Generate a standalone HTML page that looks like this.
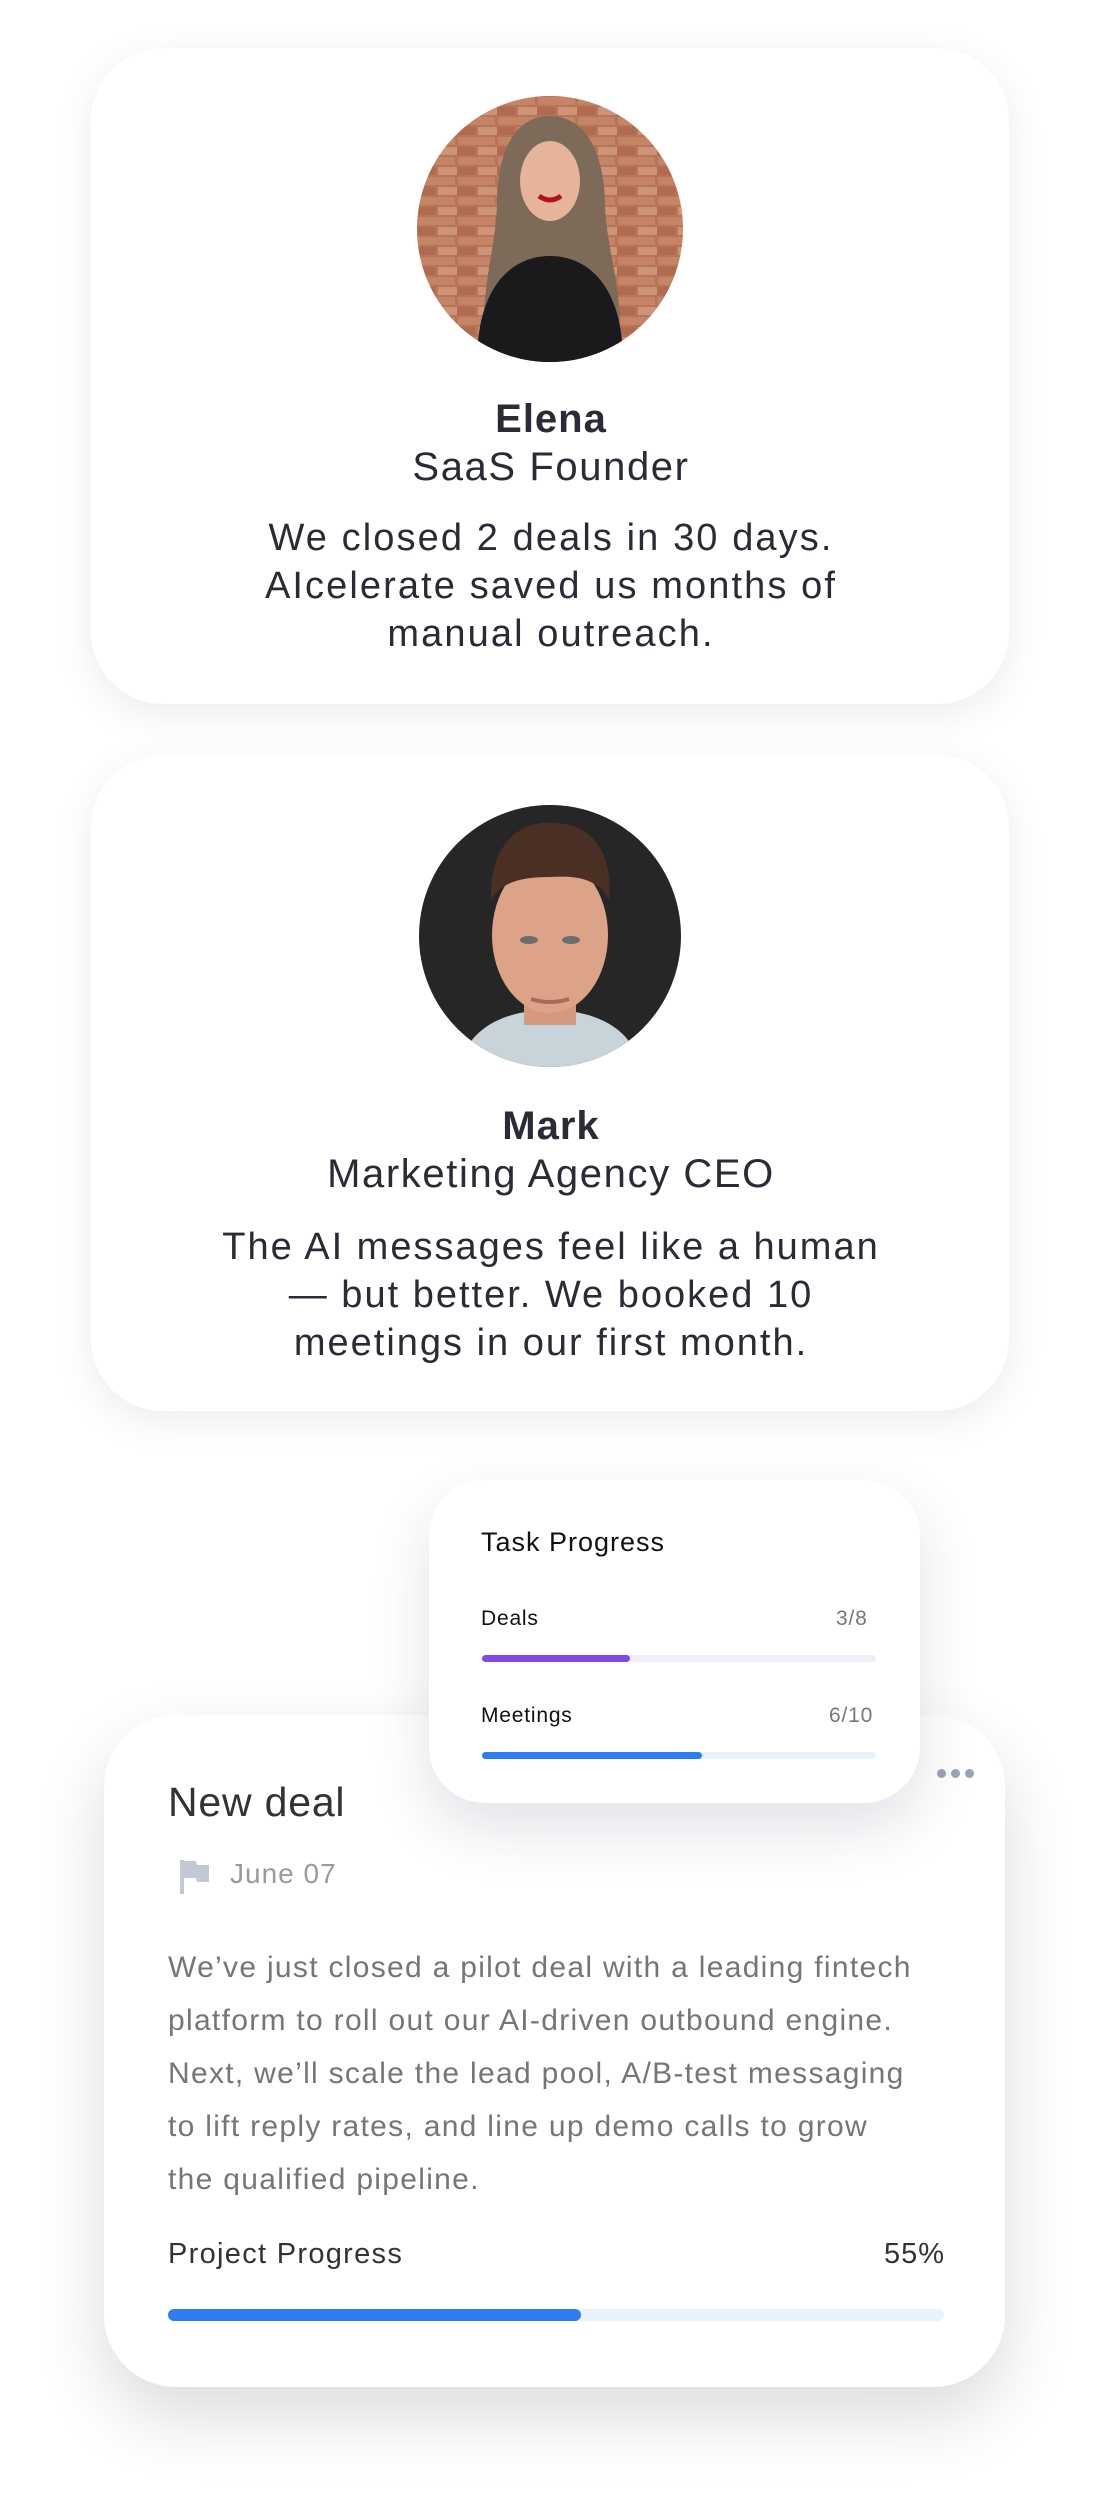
<!DOCTYPE html>
<html><head><meta charset="utf-8"><style>
*{margin:0;padding:0;box-sizing:border-box}
html,body{width:1102px;height:2510px;background:#fff;overflow:hidden;position:relative}
body{font-family:"Liberation Sans",sans-serif}
.card{position:absolute;background:#fff;border-radius:72px;box-shadow:0 10px 40px rgba(0,0,0,0.08)}
.t{position:absolute;left:0;width:100%;text-align:center;color:#2a2b36;white-space:nowrap}
.abs{position:absolute;white-space:nowrap}
.bar{position:absolute;border-radius:6px}
</style></head><body>

<div class="card" style="left:91px;top:48px;width:918px;height:656px"></div>
<svg class="abs" style="left:417px;top:96px" width="266" height="266" viewBox="0 0 266 266">
<defs><clipPath id="c1"><circle cx="133" cy="133" r="133"/></clipPath>
<pattern id="br" width="40" height="20" patternUnits="userSpaceOnUse"><rect width="40" height="20" fill="#b87458"/><rect x="1" y="1" width="37" height="8" fill="#c68466"/><rect x="-19" y="11" width="37" height="8" fill="#b06a50"/><rect x="21" y="11" width="37" height="8" fill="#cf9478"/></pattern></defs>
<g clip-path="url(#c1)"><rect width="266" height="266" fill="url(#br)"/>
<path d="M133 20 C95 20 80 60 80 110 C78 160 60 200 70 266 L200 266 C210 200 190 160 188 110 C188 60 170 20 133 20Z" fill="#7d6a58"/>
<ellipse cx="133" cy="85" rx="30" ry="40" fill="#e5b49a"/>
<path d="M60 266 C60 190 95 160 133 160 C171 160 206 190 206 266Z" fill="#1a1a1c"/>
<path d="M122 100 Q133 108 144 100" stroke="#b01020" stroke-width="5" fill="none"/></g></svg>
<div class="t" style="top:397px;font-size:40px;font-weight:bold;letter-spacing:1px">Elena</div>
<div class="t" style="top:445px;font-size:40px;letter-spacing:1.6px">SaaS Founder</div>
<div class="t" style="top:514px;font-size:38px;line-height:48px;letter-spacing:2.1px">We closed 2 deals in 30 days.<br>AIcelerate saved us months of<br>manual outreach.</div>

<div class="card" style="left:91px;top:755px;width:918px;height:656px"></div>
<svg class="abs" style="left:419px;top:805px" width="262" height="262" viewBox="0 0 262 262">
<defs><clipPath id="c2"><circle cx="131" cy="131" r="131"/></clipPath></defs>
<g clip-path="url(#c2)"><rect width="262" height="262" fill="#262626"/>
<path d="M40 262 C50 220 90 205 131 205 C172 205 212 220 222 262Z" fill="#c9d3da"/>
<rect x="105" y="180" width="52" height="40" fill="#d49a7e"/>
<ellipse cx="131" cy="130" rx="58" ry="78" fill="#dca388"/>
<path d="M72 95 C70 40 100 15 135 18 C170 18 195 45 190 95 C180 75 160 70 131 72 C100 72 82 78 72 95Z" fill="#4a3024"/>
<ellipse cx="110" cy="135" rx="9" ry="4" fill="#6a6e6a"/><ellipse cx="152" cy="135" rx="9" ry="4" fill="#6a6e6a"/>
<path d="M112 194 Q131 200 150 194" stroke="#a86a5a" stroke-width="4" fill="none"/></g></svg>
<div class="t" style="top:1104px;font-size:40px;font-weight:bold;letter-spacing:1px">Mark</div>
<div class="t" style="top:1152px;font-size:40px;letter-spacing:1.6px">Marketing Agency CEO</div>
<div class="t" style="top:1223px;font-size:38px;line-height:48px;letter-spacing:2px">The AI messages feel like a human<br>— but better. We booked 10<br>meetings in our first month.</div>

<div class="card" style="left:104px;top:1715px;width:901px;height:672px;box-shadow:0 30px 70px rgba(0,0,0,0.14)"></div>
<div class="abs" style="left:937px;top:1765px;">
<span style="display:inline-block;width:9px;height:9px;border-radius:50%;background:#9aa3b8;margin-right:5px"></span><span style="display:inline-block;width:9px;height:9px;border-radius:50%;background:#9aa3b8;margin-right:5px"></span><span style="display:inline-block;width:9px;height:9px;border-radius:50%;background:#9aa3b8"></span></div>
<div class="abs" style="left:168px;top:1779px;font-size:41px;color:#333;letter-spacing:0.8px">New deal</div>
<svg class="abs" style="left:180px;top:1860px" width="30" height="34" viewBox="0 0 30 34"><rect x="0" y="0" width="4" height="34" fill="#c3c9d4"/><path d="M4 1 L16 1 L17 5 L29 5 L29 22 L17 22 L16 18 L4 18Z" fill="#c3c9d4"/></svg>
<div class="abs" style="left:230px;top:1858px;font-size:28px;color:#9a9a9a;letter-spacing:1px">June 07</div>
<div class="abs" style="left:168px;top:1941px;font-size:30px;line-height:53px;color:#767676;letter-spacing:1.3px">We’ve just closed a pilot deal with a leading fintech<br>platform to roll out our AI-driven outbound engine.<br>Next, we’ll scale the lead pool, A/B-test messaging<br>to lift reply rates, and line up demo calls to grow<br>the qualified pipeline.</div>
<div class="abs" style="left:168px;top:2238px;font-size:29px;color:#333;letter-spacing:1.3px">Project Progress</div>
<div class="abs" style="left:884px;top:2238px;font-size:29px;color:#333;letter-spacing:1px">55%</div>
<div class="bar" style="left:168px;top:2309px;width:776px;height:12px;background:#e8f1fc"></div>
<div class="bar" style="left:168px;top:2309px;width:413px;height:12px;background:#2f7ef1"></div>

<div class="card" style="left:429px;top:1480px;width:491px;height:323px;border-radius:56px;box-shadow:0 25px 60px rgba(30,30,80,0.13)"></div>
<div class="abs" style="left:481px;top:1527px;font-size:27px;color:#111;letter-spacing:1px">Task Progress</div>
<div class="abs" style="left:481px;top:1607px;font-size:21px;color:#111;letter-spacing:0.8px">Deals</div>
<div class="abs" style="left:836px;top:1607px;font-size:21px;color:#777;letter-spacing:0.8px">3/8</div>
<div class="bar" style="left:482px;top:1655px;width:394px;height:7px;background:#f0ecfb"></div>
<div class="bar" style="left:482px;top:1655px;width:148px;height:7px;background:#7e4be8"></div>
<div class="abs" style="left:481px;top:1704px;font-size:21px;color:#111;letter-spacing:0.8px">Meetings</div>
<div class="abs" style="left:829px;top:1704px;font-size:21px;color:#777;letter-spacing:0.8px">6/10</div>
<div class="bar" style="left:482px;top:1752px;width:394px;height:7px;background:#e8f1fc"></div>
<div class="bar" style="left:482px;top:1752px;width:220px;height:7px;background:#2f7ef1"></div>
</body></html>
